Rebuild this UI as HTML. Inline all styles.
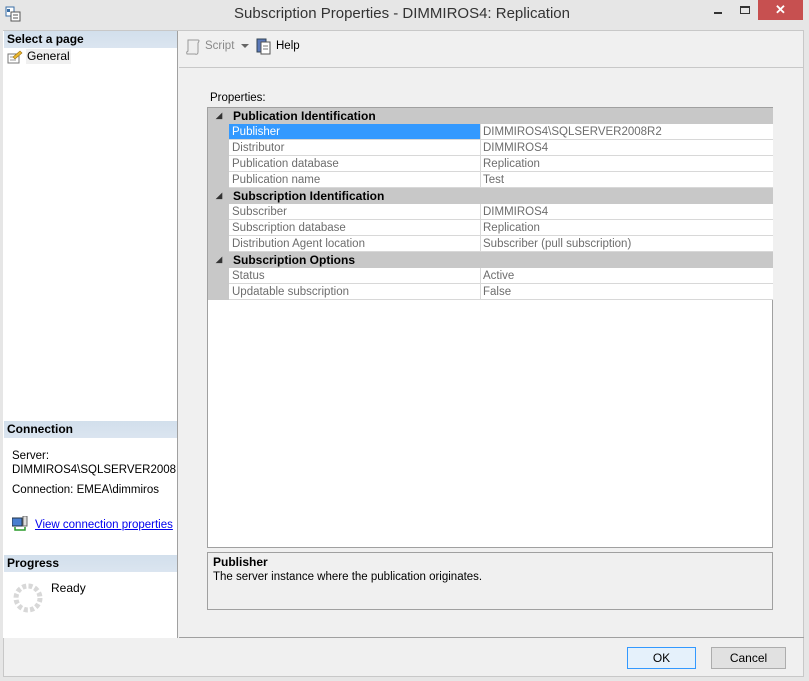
<!DOCTYPE html>
<html><head><style>
*{margin:0;padding:0;box-sizing:border-box}
body{width:809px;height:681px;background:#e6e6e6;font-family:"Liberation Sans",sans-serif;font-size:11.5px;position:relative;overflow:hidden;color:#000}
.a{position:absolute}
.hd{background:linear-gradient(#d2dfec,#dbe5f0);font-weight:bold;font-size:12px;padding-left:3px;line-height:17px}
.row{position:absolute;left:0;width:565px;height:16px;line-height:16px}
.cat{background:#c8c8c8;font-weight:bold;font-size:12px}
.cat span{position:absolute;left:25px}
.cat i{position:absolute;left:8px;top:0;font-style:normal;font-size:8px;color:#333}
.pr{border-bottom:1px solid #d8d8d8;background:#fff;color:#6d6d6d}
.pr .g{position:absolute;left:0;top:-1px;width:21px;height:17px;background:#c8c8c8}
.pr .n{position:absolute;left:21px;width:252px;height:15px;padding-left:3px;border-right:1px solid #d8d8d8}
.pr .v{position:absolute;left:274px;padding-left:1px}
.btn{position:absolute;height:22px;border:1px solid #adadad;background:#e1e1e1;text-align:center;line-height:20px;font-size:12px}
</style></head><body>
<svg class="a" style="left:5px;top:6px" width="16" height="16"><rect x="1" y="1" width="8" height="9" fill="#fff" stroke="#3a6ea5"/><rect x="2" y="3" width="3" height="3" fill="#3a6ea5"/><rect x="6" y="6" width="9" height="9" fill="#fff" stroke="#555"/><line x1="8" y1="9" x2="13" y2="9" stroke="#555"/><line x1="8" y1="12" x2="13" y2="12" stroke="#555"/></svg>
<div class="a" style="left:0;width:804px;top:5px;text-align:center;font-size:15px;color:#333">Subscription Properties - DIMMIROS4: Replication</div>
<div class="a" style="left:714px;top:12px;width:8px;height:2px;background:#333"></div>
<div class="a" style="left:740px;top:6px;width:10px;height:8px;border:1px solid #333;border-top-width:2px"></div>
<div class="a" style="left:758px;top:0;width:45px;height:20px;background:#c75050;color:#fff;text-align:center;font-size:13px;line-height:20px;font-weight:bold">✕</div>
<div class="a" style="left:3px;top:30px;width:801px;height:647px;background:#f0f0f0;border:1px solid #c8c8c8"></div>
<div class="a" style="left:3px;top:31px;width:175px;height:607px;background:#fff;border-right:1px solid #a0a0a0;overflow:hidden"></div>
<div class="a hd" style="left:4px;top:31px;width:173px">Select a page</div>
<svg class="a" style="left:7px;top:50px" width="16" height="14"><rect x="1" y="4" width="11" height="9" fill="#fff" stroke="#777"/><line x1="3" y1="7" x2="9" y2="7" stroke="#999"/><line x1="3" y1="10" x2="9" y2="10" stroke="#999"/><path d="M6 7 L13 1 L15 3 L8 9 Z" fill="#e8b830" stroke="#a07010" stroke-width=".6"/></svg>
<div class="a" style="left:26px;top:49px;background:#f0f0f0;padding:0 1px;line-height:15px;font-size:12px">General</div>
<div class="a hd" style="left:4px;top:421px;width:173px">Connection</div>
<div class="a" style="left:12px;top:449px;line-height:14px;width:164px;overflow:hidden;white-space:nowrap">Server:<br>DIMMIROS4\SQLSERVER2008R2</div>
<div class="a" style="left:12px;top:484px">Connection: EMEA\dimmiros</div>
<svg class="a" style="left:12px;top:516px" width="17" height="16"><rect x="0" y="2" width="10" height="8" fill="#4a7fd0" stroke="#234"/><rect x="11" y="0" width="4" height="10" fill="#ddd" stroke="#666"/><path d="M3 11 V14 H13 V11" fill="none" stroke="#2a9a2a" stroke-width="1.5"/></svg>
<div class="a" style="left:35px;top:519px;color:#0000ee;text-decoration:underline">View connection properties</div>
<div class="a hd" style="left:4px;top:555px;width:173px">Progress</div>
<svg class="a" style="left:12px;top:582px" width="32" height="32"><circle cx="16" cy="16" r="12" fill="none" stroke="#d8d8d8" stroke-width="5" stroke-dasharray="4 2.3"/></svg>
<div class="a" style="left:51px;top:581px;font-size:12px">Ready</div>
<div class="a" style="left:179px;top:67px;width:625px;height:1px;background:#c8c8c8"></div>
<svg class="a" style="left:185px;top:38px" width="16" height="18"><path d="M3 2 H13 Q15 2 13 5 V14 Q13 17 10 16 H2 Q1 14 3 13 Z" fill="#eee" stroke="#999"/></svg>
<div class="a" style="left:205px;top:40px;color:#8a8a8a">Script</div>
<div class="a" style="left:241px;top:44px;border:4px solid transparent;border-top:4px solid #666"></div>
<svg class="a" style="left:256px;top:38px" width="16" height="18"><rect x="1" y="1" width="9" height="13" fill="#5a78b8" stroke="#345"/><rect x="5" y="4" width="9" height="12" fill="#fff" stroke="#555"/><line x1="7" y1="8" x2="12" y2="8" stroke="#777"/><line x1="7" y1="11" x2="12" y2="11" stroke="#777"/></svg>
<div class="a" style="left:276px;top:40px">Help</div>
<div class="a" style="left:210px;top:92px">Properties:</div>
<div class="a" style="left:207px;top:107px;width:566px;height:441px;background:#fff;border:1px solid #a0a0a0">
 <div class="row cat" style="top:0"><i>◢</i><span>Publication Identification</span></div>
 <div class="row pr" style="top:16px"><div class="g"></div><div class="n" style="background:#3399ff;color:#fff">Publisher</div><div class="v">DIMMIROS4\SQLSERVER2008R2</div></div>
 <div class="row pr" style="top:32px"><div class="g"></div><div class="n">Distributor</div><div class="v">DIMMIROS4</div></div>
 <div class="row pr" style="top:48px"><div class="g"></div><div class="n">Publication database</div><div class="v">Replication</div></div>
 <div class="row pr" style="top:64px"><div class="g"></div><div class="n">Publication name</div><div class="v">Test</div></div>
 <div class="row cat" style="top:80px"><i>◢</i><span>Subscription Identification</span></div>
 <div class="row pr" style="top:96px"><div class="g"></div><div class="n">Subscriber</div><div class="v">DIMMIROS4</div></div>
 <div class="row pr" style="top:112px"><div class="g"></div><div class="n">Subscription database</div><div class="v">Replication</div></div>
 <div class="row pr" style="top:128px"><div class="g"></div><div class="n">Distribution Agent location</div><div class="v">Subscriber (pull subscription)</div></div>
 <div class="row cat" style="top:144px"><i>◢</i><span>Subscription Options</span></div>
 <div class="row pr" style="top:160px"><div class="g"></div><div class="n">Status</div><div class="v">Active</div></div>
 <div class="row pr" style="top:176px"><div class="g"></div><div class="n">Updatable subscription</div><div class="v">False</div></div>
</div>
<div class="a" style="left:207px;top:552px;width:566px;height:58px;border:1px solid #a0a0a0;background:#f0f0f0">
 <div class="a" style="left:5px;top:2px;font-weight:bold;font-size:12px">Publisher</div>
 <div class="a" style="left:5px;top:18px">The server instance where the publication originates.</div>
</div>
<div class="a" style="left:179px;top:637px;width:625px;height:1px;background:#a0a0a0"></div>
<div class="btn" style="left:627px;top:647px;width:69px;border-color:#3399ff;background:#e5f1fb">OK</div>
<div class="btn" style="left:711px;top:647px;width:75px">Cancel</div>
</body></html>
